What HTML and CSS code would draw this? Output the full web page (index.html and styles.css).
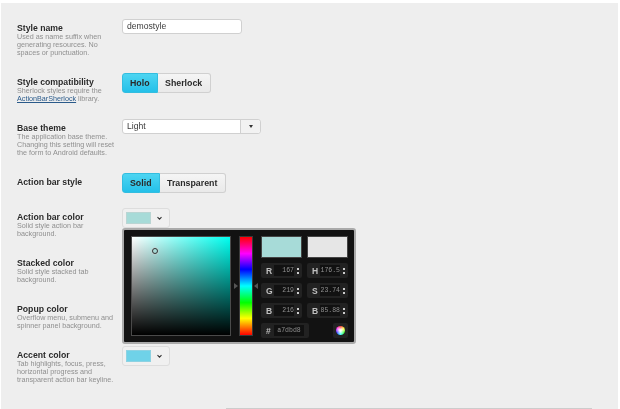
FILE: index.html
```html
<!DOCTYPE html>
<html lang="en">
<head>
<meta charset="utf-8">
<title>Style generator</title>
<link rel="stylesheet" href="styles.css">
</head>
<body>
<main class="panel">
  <section class="row h54">
    <div class="info"><h3>Style name</h3><p>Used as name suffix when generating resources. No spaces or punctuation.</p></div>
    <input class="text" type="text" value="demostyle">
  </section>
  <section class="row h46">
    <div class="info"><h3>Style compatibility</h3><p>Sherlock styles require the <a href="#">ActionBarSherlock</a> library.</p></div>
    <div class="seg"><span class="on">Holo</span><span>Sherlock</span></div>
  </section>
  <section class="row h54">
    <div class="info"><h3>Base theme</h3><p>The application base theme. Changing this setting will reset the form to Android defaults.</p></div>
    <div class="select"><span class="select-val">Light</span><span class="select-btn"><i class="caret"></i></span></div>
  </section>
  <section class="row h35">
    <div class="info"><h3>Action bar style</h3></div>
    <div class="seg"><span class="on">Solid</span><span>Transparent</span></div>
  </section>
  <section class="row h46">
    <div class="info"><h3>Action bar color</h3><p>Solid style action bar background.</p></div>
    <div class="swatch-btn"><i class="sw sw-bar"></i><svg class="chev" width="7" height="5" viewBox="0 0 7 5"><path d="M1.500 1.200l2 2 2-2" fill="none" stroke="#333" stroke-width="1.100"/></svg></div>
  </section>
  <section class="row h46">
    <div class="info"><h3>Stacked color</h3><p>Solid style stacked tab background.</p></div>
    <div class="swatch-btn"><i class="sw sw-bar"></i></div>
  </section>
  <section class="row h46">
    <div class="info"><h3>Popup color</h3><p>Overflow menu, submenu and spinner panel background.</p></div>
    <div class="swatch-btn"><i class="sw sw-bar"></i></div>
  </section>
  <section class="row">
    <div class="info"><h3>Accent color</h3><p>Tab highlights, focus, press, horizontal progress and transparent action bar keyline.</p></div>
    <div class="swatch-btn"><i class="sw sw-accent"></i><svg class="chev" width="7" height="5" viewBox="0 0 7 5"><path d="M1.500 1.200l2 2 2-2" fill="none" stroke="#333" stroke-width="1.100"/></svg></div>
  </section>

  <div class="picker">
    <div class="sat"><div class="sat-white"><div class="sat-black"><i class="cursor"></i></div></div></div>
    <div class="hue-wrap"><i class="arrow arrow-r"></i><div class="hue"></div><i class="arrow arrow-l"></i></div>
    <div class="controls">
      <div class="previews"><i class="pv pv-new"></i><i class="pv pv-old"></i></div>
      <div class="fields">
        <div class="field"><b>R</b><span class="num">167</span><i class="spin"></i></div>
        <div class="field"><b>H</b><span class="num">176.5</span><i class="spin"></i></div>
        <div class="field"><b>G</b><span class="num">219</span><i class="spin"></i></div>
        <div class="field"><b>S</b><span class="num">23.74</span><i class="spin"></i></div>
        <div class="field"><b>B</b><span class="num">216</span><i class="spin"></i></div>
        <div class="field"><b>B</b><span class="num">85.88</span><i class="spin"></i></div>
      </div>
      <div class="hexrow">
        <div class="field hex"><b>#</b><span class="num">a7dbd8</span></div>
        <div class="wheel-box"><i class="wheel"></i></div>
      </div>
    </div>
  </div>
  <div class="edge-line"></div>
</main>
</body>
</html>
```
FILE: styles.css
```css
* { box-sizing: border-box; }
html, body { margin: 0; padding: 0; background: #fff; }
body { width: 620px; height: 409px; overflow: hidden; font-family: "Liberation Sans", Arial, sans-serif; }
.panel { position: relative; margin: 3px 0 0 1px; width: 617px; height: 406px; background: #eee; padding: 16px 0 0 16px; filter: blur(.3px); }
.row { display: flex; align-items: flex-start; }
.h54 { height: 54px; }
.h46 { height: 46px; }
.h35 { height: 35px; }
.info { width: 105px; flex: none; padding-top: 4px; }
.info h3 { margin: 0; font-size: 8.700px; line-height: 10px; font-weight: 700; color: #2a2a2a; text-shadow: 0 1px 0 rgba(255,255,255,.5); }
.info p { margin: 0; font-size: 7.200px; line-height: 8px; color: #8f8f8f; }
.info a { color: #2a5a8a; text-decoration: underline; }
.text { width: 120px; height: 15px; margin: 0; padding: 0 4px 1px; border: 1px solid #d0d0d0; border-radius: 3px; background: #fff; font: 8.600px "Liberation Sans", Arial, sans-serif; color: #3a3a3a; outline: 0; }
.seg { display: flex; height: 20px; font-size: 8.800px; font-weight: 700; color: #2a2a2a; }
.seg span { display: flex; align-items: center; padding: 0 8px 0 7.500px; background: linear-gradient(#f5f5f5, #e9e9e9); border: 1px solid #d0d0d0; border-left: 0; border-radius: 0 3px 3px 0; }
.seg span.on { padding: 0 7px; background: linear-gradient(#4dd5f2, #24c0e9); border: 1px solid #33bddf; border-radius: 3px 0 0 3px; }
.select { display: flex; width: 139px; height: 15px; border: 1px solid #d0d0d0; border-radius: 3px; background: #fff; font-size: 8.600px; line-height: 12px; color: #3a3a3a; }
.select-val { flex: 1; padding-left: 4px; }
.select-btn { width: 20px; display: flex; align-items: center; justify-content: center; background: #f2f2f2; border-left: 1px solid #d0d0d0; border-radius: 0 3px 3px 0; }
.caret { width: 0; height: 0; border: 2.500px solid transparent; border-top: 3px solid #333; border-bottom: 0; }
.swatch-btn { display: flex; align-items: center; width: 48px; height: 20px; padding-left: 3px; border: 1px solid #ddd; border-radius: 3px; background: #f0f0f0; }
.sw { display: block; width: 25px; height: 12px; border: 1px solid #ccc; }
.sw-bar { background: #a7dbd8; border-color: #b9d5d3; }
.sw-accent { background: #6fd2e8; border-color: #8dd2e2; }
.chev { margin-left: 5px; }
.picker { position: absolute; left: 121px; top: 225px; width: 234px; height: 116px; background: #121212; border: 2px solid #aaa; border-radius: 3px; display: flex; padding: 6px 6px 6px 7px; }
.sat { flex: none; width: 100px; height: 100px; border: 1px solid #4a4a4a; background: #00fff0; }
.sat-white { width: 100%; height: 100%; background: linear-gradient(90deg, #fff, rgba(255,255,255,0)); }
.sat-black { position: relative; width: 100%; height: 100%; background: linear-gradient(rgba(0,0,0,0), #000); }
.cursor { position: absolute; left: 20px; top: 11px; width: 6px; height: 6px; border: 1px solid #333; border-radius: 50%; box-shadow: 0 0 0 .5px #ccc; }
.hue-wrap { position: relative; flex: none; width: 30px; height: 100px; }
.hue { position: absolute; left: 8px; top: 0; width: 14px; height: 100px; border: 1px solid #3a3a3a; background: linear-gradient(#f00, #f0f 17%, #00f 33%, #0ff 50%, #0f0 67%, #ff0 83%, #f00); }
.arrow { position: absolute; top: 47px; width: 0; height: 0; border: 3.500px solid transparent; }
.arrow-r { left: 3px; border-left: 4px solid #555; border-right: 0; }
.arrow-l { left: 23px; border-right: 4px solid #555; border-left: 0; }
.controls { flex: none; width: 87px; }
.previews { display: flex; justify-content: space-between; }
.pv { display: block; width: 41px; height: 22px; border: 1px solid #444; }
.pv-new { background: #a7dbd8; }
.pv-old { background: #e6e6e6; }
.fields { display: grid; grid-template-columns: 41px 41px; justify-content: space-between; row-gap: 5px; margin-top: 5px; }
.field { display: flex; align-items: center; height: 15px; background: #222; border-radius: 2px; padding-left: 5px; position: relative; }
.field b { flex: none; width: 8px; font-size: 8.500px; color: #c0c0c0; font-weight: 700; }
.num { flex: none; width: 20px; height: 11px; background: #111; color: #909090; font: 6.500px/11px "Liberation Mono", monospace; text-align: right; white-space: nowrap; }
.spin { position: absolute; right: 3px; top: 5px; width: 2px; height: 6px; background: linear-gradient(#ccc 0 2px, transparent 2px 4px, #ccc 4px); }
.hexrow { display: flex; justify-content: space-between; margin-top: 5px; }
.hex { width: 48px; }
.hex .num { width: 30px; text-align: center; }
.wheel-box { width: 15px; height: 15px; background: #222; border-radius: 2px; display: flex; align-items: center; justify-content: center; }
.wheel { width: 9px; height: 9px; border-radius: 50%; background: radial-gradient(#fff 10%, transparent 70%), conic-gradient(#f33, #ff3, #3f3, #3ff, #33f, #f3f, #f33); }
.edge-line { position: absolute; left: 225px; bottom: 0; width: 366px; height: 1px; background: #ccc; }
```
